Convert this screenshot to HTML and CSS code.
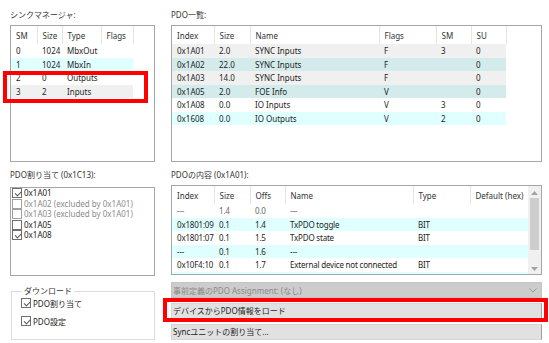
FILE: index.html
```html
<!DOCTYPE html>
<html lang="ja">
<head>
    <meta charset="UTF-8">
    <title>PDO設定</title>
    <link rel="stylesheet" href="styles.css">
</head>
<body>
    <div class="window">
        <div class="col">
            <div class="caption">シンクマネージャ:</div>
            <div class="list sync-list">
                <table class="grid sync-grid">
                    <colgroup><col style="width:26px"><col style="width:25px"><col style="width:39px"><col style="width:32px"></colgroup>
                    <tr class="head"><th>SM</th><th>Size</th><th>Type</th><th>Flags</th></tr>
                    <tr><td>0</td><td>1024</td><td>MbxOut</td><td></td></tr>
                    <tr class="cyan"><td>1</td><td>1024</td><td>MbxIn</td><td></td></tr>
                    <tr><td>2</td><td>0</td><td>Outputs</td><td></td></tr>
                    <tr class="gray"><td>3</td><td>2</td><td>Inputs</td><td></td></tr>
                </table>
            </div>

            <div class="caption caption-second">PDO割り当て (0x1C13):</div>
            <div class="list assign-list">
                <div class="check-item"><span class="box checked"></span>0x1A01</div>
                <div class="check-item disabled"><span class="box"></span>0x1A02 (excluded by 0x1A01)</div>
                <div class="check-item disabled"><span class="box"></span>0x1A03 (excluded by 0x1A01)</div>
                <div class="check-item"><span class="box"></span>0x1A05</div>
                <div class="check-item"><span class="box checked"></span>0x1A08</div>
            </div>

            <fieldset class="group">
                <legend>ダウンロード</legend>
                <div class="group-item"><span class="box checked"></span>PDO割り当て</div>
                <div class="group-item"><span class="box checked"></span>PDO設定</div>
            </fieldset>
        </div>

        <div class="col">
            <div class="caption">PDO一覧:</div>
            <div class="list pdo-list">
                <table class="grid pdo-grid">
                    <colgroup><col style="width:42px"><col style="width:36px"><col style="width:129px"><col style="width:57px"><col style="width:35px"><col style="width:35px"></colgroup>
                    <tr class="head"><th>Index</th><th>Size</th><th>Name</th><th>Flags</th><th>SM</th><th>SU</th></tr>
                    <tr class="gray"><td>0x1A01</td><td>2.0</td><td>SYNC Inputs</td><td>F</td><td>3</td><td>0</td></tr>
                    <tr class="teal"><td>0x1A02</td><td>22.0</td><td>SYNC Inputs</td><td>F</td><td></td><td>0</td></tr>
                    <tr class="gray"><td>0x1A03</td><td>14.0</td><td>SYNC Inputs</td><td>F</td><td></td><td>0</td></tr>
                    <tr class="teal"><td>0x1A05</td><td>2.0</td><td>FOE Info</td><td>V</td><td></td><td>0</td></tr>
                    <tr><td>0x1A08</td><td>0.0</td><td>IO Inputs</td><td>V</td><td>3</td><td>0</td></tr>
                    <tr class="cyan"><td>0x1608</td><td>0.0</td><td>IO Outputs</td><td>V</td><td>2</td><td>0</td></tr>
                </table>
            </div>

            <div class="caption caption-content">PDOの内容 (0x1A01):</div>
            <div class="list content-list">
                <div class="content-body">
                    <table class="grid content-grid">
                        <colgroup><col style="width:42px"><col style="width:36px"><col style="width:35px"><col style="width:128px"><col style="width:57px"><col style="width:58px"></colgroup>
                        <tr class="head"><th>Index</th><th>Size</th><th>Offs</th><th>Name</th><th>Type</th><th>Default (hex)</th></tr>
                        <tr class="pad-row"><td>---</td><td>1.4</td><td>0.0</td><td>---</td><td></td><td></td></tr>
                        <tr class="cyan"><td>0x1801:09</td><td>0.1</td><td>1.4</td><td>TxPDO toggle</td><td>BIT</td><td></td></tr>
                        <tr><td>0x1801:07</td><td>0.1</td><td>1.5</td><td>TxPDO state</td><td>BIT</td><td></td></tr>
                        <tr class="cyan"><td>---</td><td>0.1</td><td>1.6</td><td>---</td><td></td><td></td></tr>
                        <tr><td>0x10F4:10</td><td>0.1</td><td>1.7</td><td>External device not connected</td><td>BIT</td><td></td></tr>
                        <tr class="cyan"><td></td><td></td><td></td><td></td><td></td><td></td></tr>
                    </table>
                </div>
                <div class="scrollbar">
                    <svg class="arrow" width="7" height="4" viewBox="0 0 7 4"><path d="M0 4 L3.5 0 L7 4 Z" fill="#a3a3a3"/></svg>
                    <div class="thumb"></div>
                    <svg class="arrow" width="7" height="4" viewBox="0 0 7 4"><path d="M0 0 L3.5 4 L7 0 Z" fill="#a3a3a3"/></svg>
                </div>
            </div>

            <div class="combo">
                <span>事前定義のPDO Assignment: (なし)</span>
                <svg width="8" height="5" viewBox="0 0 8 5"><path d="M0.5 0.5 L4 4 L7.5 0.5" fill="none" stroke="#9a9a9a" stroke-width="1"/></svg>
            </div>
            <div class="btn btn-load">デバイスからPDO情報をロード</div>
            <div class="btn btn-sync">Syncユニットの割り当て...</div>
        </div>

        <div class="mark mark-sync"></div>
        <div class="mark mark-load"></div>
    </div>
</body>
</html>
```

FILE: styles.css
```css
body {
    margin: 0;
    background-color: #ffffff;
    font-family: "Noto Sans", "Noto Sans CJK JP", sans-serif;
    font-size: 8px;
    color: #1e1e1e;
}
.window {
    position: relative;
    width: 549px;
    height: 343px;
    box-sizing: border-box;
    padding: 9px 0 0 10px;
    display: grid;
    grid-template-columns: 145px 371px;
    column-gap: 16px;
    align-items: start;
}
.col {
    display: flex;
    flex-direction: column;
}
.caption {
    height: 12px;
    line-height: 12px;
    margin-bottom: 4px;
    color: #333;
    white-space: nowrap;
}
.caption-second {
    margin-top: 7px;
    margin-bottom: 6px;
}
.caption-content {
    margin-top: 7px;
    margin-bottom: 4px;
}
.list {
    border: 1px solid #a6a6a6;
    background-color: #fff;
    overflow: hidden;
    box-sizing: border-box;
}
.sync-list, .pdo-list {
    height: 137px;
}
.assign-list {
    height: 89px;
}
.content-list {
    height: 90px;
    display: flex;
}
.grid {
    border-collapse: collapse;
    table-layout: fixed;
}
.sync-grid {
    width: 122px;
}
.pdo-grid {
    width: 334px;
}
.content-grid {
    width: 356px;
}
.grid th, .grid td {
    padding: 0 0 0 5px;
    white-space: nowrap;
    overflow: hidden;
    text-align: left;
    font-weight: normal;
}
.grid th {
    height: 18px;
    color: #333;
    border-right: 1px solid #e5e5e5;
}
.grid td {
    height: 13.5px;
}
.content-grid td {
    letter-spacing: -0.2px;
}
.gray {
    background-color: #f0f0f0;
}
.teal {
    background-color: #d4ebec;
}
.cyan {
    background-color: #e0ffff;
}
.pad-row td {
    color: #666;
}
.content-body {
    flex: 1;
    overflow: hidden;
}
.scrollbar {
    width: 13px;
    background-color: #f0f0f0;
    display: flex;
    flex-direction: column;
    align-items: center;
    padding: 5px 0 3px;
    box-sizing: border-box;
}
.thumb {
    width: 9px;
    height: 52px;
    margin: 3px 0 auto;
    background-color: #cdcdcd;
}
.check-item {
    height: 10.5px;
    line-height: 10.5px;
    display: flex;
    align-items: center;
    padding-left: 1px;
    white-space: nowrap;
}
.check-item.disabled {
    color: #8c8c8c;
}
.box {
    width: 8px;
    height: 8px;
    border: 1px solid #707070;
    background-color: #fff;
    margin-right: 2px;
    flex: none;
    position: relative;
}
.disabled .box {
    border-color: #a0a0a0;
}
.box.checked::after {
    content: "";
    position: absolute;
    left: 1.5px;
    top: 1.5px;
    width: 5px;
    height: 2.5px;
    border-left: 1px solid #555;
    border-bottom: 1px solid #555;
    transform: rotate(-45deg);
}
.group {
    margin: 9px 0 0 1px;
    padding: 0 0 0 9px;
    height: 53px;
    border: 1px solid #dcdcdc;
    box-sizing: content-box;
}
.group legend {
    padding: 0 2px;
    margin-left: 1px;
    line-height: 12px;
    color: #333;
}
.group-item {
    height: 18px;
    display: flex;
    align-items: center;
}
.group-item:first-of-type {
    margin-top: -3px;
}
.combo {
    margin-top: 7px;
    height: 16px;
    box-sizing: border-box;
    border: 1px solid #c4c4c4;
    background-color: #cccccc;
    color: #8a8a8a;
    display: flex;
    align-items: center;
    justify-content: space-between;
    padding: 0 4px 0 1px;
}
.btn {
    margin-top: 5px;
    height: 16px;
    line-height: 14px;
    box-sizing: border-box;
    border: 1px solid #d6d6d6;
    border-right-color: #a0a0a0;
    background-color: #e1e1e1;
    padding-left: 1px;
    white-space: nowrap;
}
.mark {
    position: absolute;
    border: 4px solid #ff0000;
    box-sizing: border-box;
}
.mark-sync {
    left: 3px;
    top: 71px;
    width: 145px;
    height: 32px;
}
.mark-load {
    left: 163px;
    top: 298px;
    width: 385px;
    height: 24px;
}
```
